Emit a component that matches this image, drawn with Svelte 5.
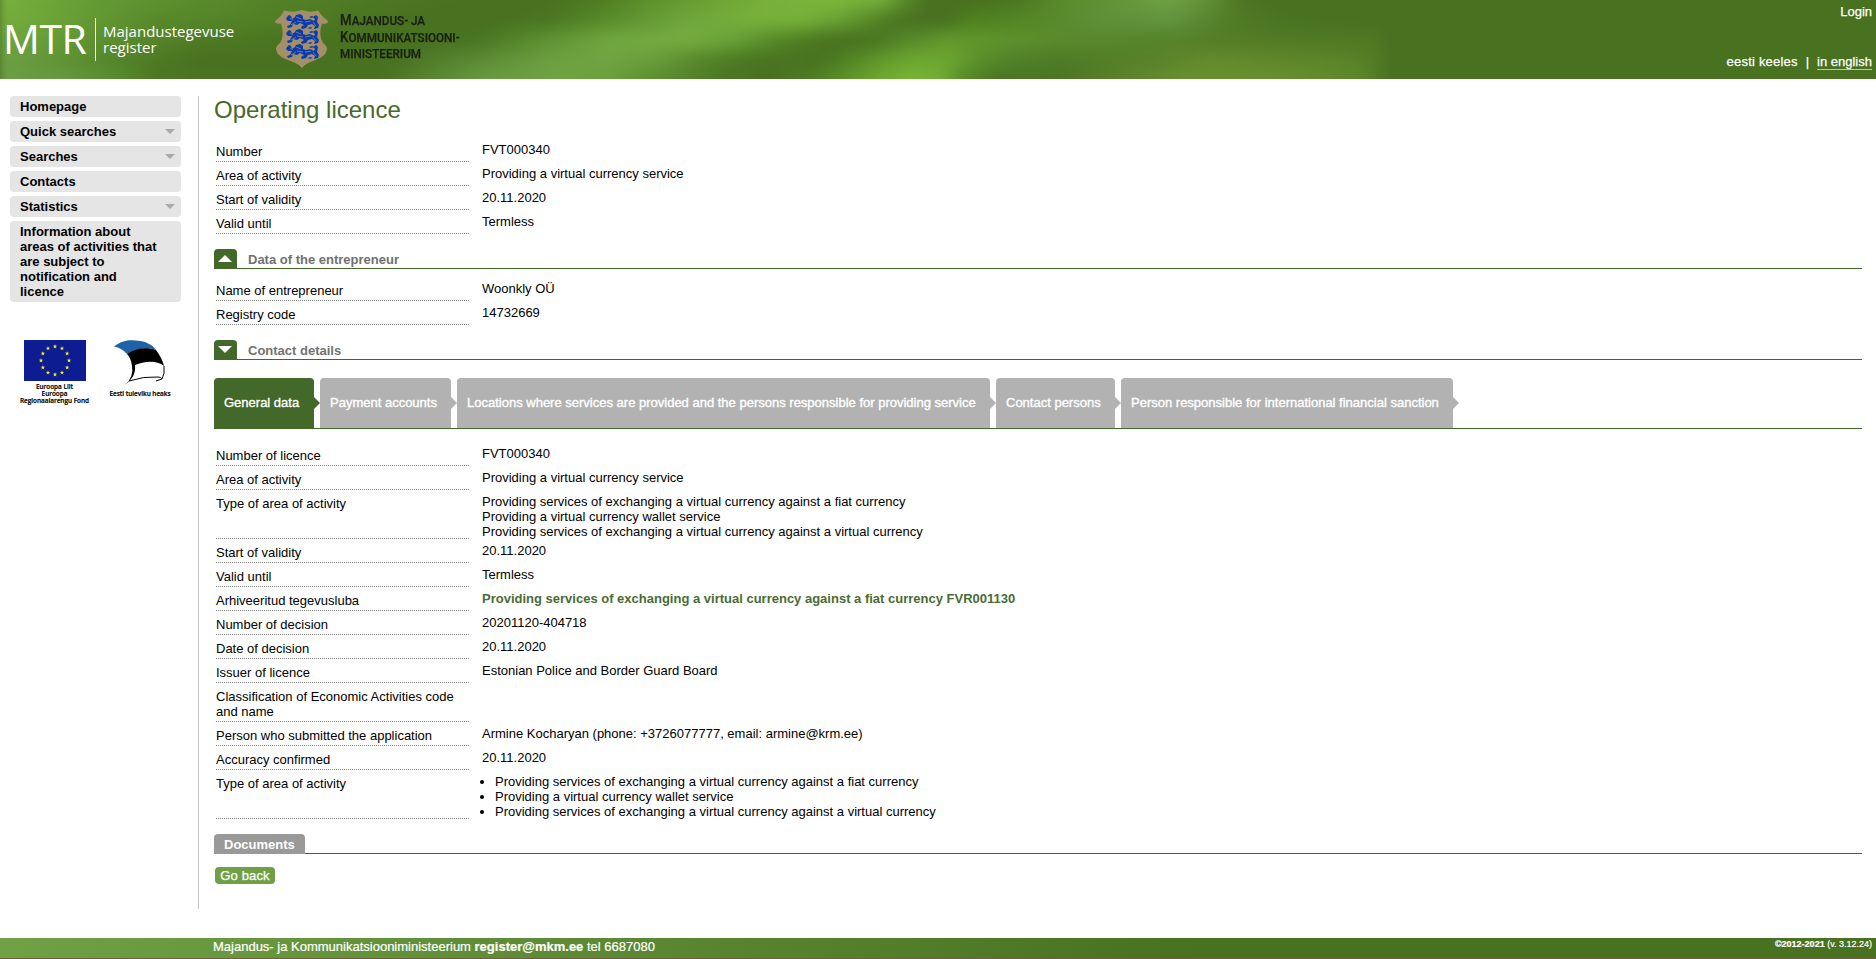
<script>
  const menu = [
    { label: 'Homepage' },
    { label: 'Quick searches', sub: true },
    { label: 'Searches', sub: true },
    { label: 'Contacts' },
    { label: 'Statistics', sub: true },
    { label: 'Information about areas of activities that are subject to notification and licence' }
  ];
  const summary = [
    ['Number', 'FVT000340'],
    ['Area of activity', 'Providing a virtual currency service'],
    ['Start of validity', '20.11.2020'],
    ['Valid until', 'Termless']
  ];
  const company = [
    ['Name of entrepreneur', 'Woonkly OÜ'],
    ['Registry code', '14732669']
  ];
  const tabs = [
    { label: 'General data', width: 100 },
    { label: 'Payment accounts', width: 131 },
    { label: 'Locations where services are provided and the persons responsible for providing service', width: 533 },
    { label: 'Contact persons', width: 119 },
    { label: 'Person responsible for international financial sanction', width: 332 }
  ];
  const services = [
    'Providing services of exchanging a virtual currency against a fiat currency',
    'Providing a virtual currency wallet service',
    'Providing services of exchanging a virtual currency against a virtual currency'
  ];
  const details = [
    { k: 'Number of licence', v: ['FVT000340'] },
    { k: 'Area of activity', v: ['Providing a virtual currency service'] },
    { k: 'Type of area of activity', v: services },
    { k: 'Start of validity', v: ['20.11.2020'] },
    { k: 'Valid until', v: ['Termless'] },
    { k: 'Arhiveeritud tegevusluba', link: 'Providing services of exchanging a virtual currency against a fiat currency FVR001130' },
    { k: 'Number of decision', v: ['20201120-404718'] },
    { k: 'Date of decision', v: ['20.11.2020'] },
    { k: 'Issuer of licence', v: ['Estonian Police and Border Guard Board'] },
    { k: 'Classification of Economic Activities code and name', v: [] },
    { k: 'Person who submitted the application', v: ['Armine Kocharyan (phone: +3726077777, email: armine@krm.ee)'] },
    { k: 'Accuracy confirmed', v: ['20.11.2020'] },
    { k: 'Type of area of activity', list: services }
  ];
  const stars = Array.from({ length: 12 }, (_, i) => {
    const a = (i * Math.PI) / 6;
    return [31 + 14 * Math.sin(a), 20.5 - 14 * Math.cos(a)];
  });

  // Colour stops along x at several heights of the header; each layer fades into the next one down.
  const waves = [
    [0, '#79b13f 0,#649a34 100px,#598b2c 200px,#527f26 300px,#4b7622 400px,#487120 480px,#487120 545px,#4e7a22 592px,#5f942c 658px,#78b03b 766px,#7cb83c 837px,#74ac3a 882px,#5a8a2b 905px,#487120 930px,#487120 980px,#4b7622 1015px,#588a2a 1060px,#6ea043 1165px,#69993e 1190px,#4c7521 1245px,#487120 1270px'],
    [20, '#76ae3e 0,#69a035 67px,#588a2b 150px,#4f7c25 300px,#487120 400px,#487120 500px,#4a7621 547px,#5a8e2c 614px,#6ea43c 681px,#78b03b 748px,#77b13a 800px,#68a033 840px,#4c7822 890px,#487120 917px,#487120 945px,#50821f 975px,#568828 1038px,#60903a 1105px,#639440 1170px,#527d27 1230px,#487321 1290px,#487120 1390px'],
    [40, '#6fa63f 0,#639834 67px,#4f7b24 200px,#49731f 300px,#487120 440px,#487622 480px,#5f9232 547px,#72a840 614px,#76ac3f 690px,#68a038 735px,#548626 780px,#487120 830px,#48741f 875px,#55862a 904px,#64992b 949px,#5f942c 993px,#5a8a2c 1060px,#56842b 1150px,#527b25 1250px,#4f7923 1375px,#487120 1390px'],
    [60, '#6da044 0,#5b8f30 80px,#4f7b24 150px,#487120 200px,#487321 400px,#547f2b 440px,#5c8b35 480px,#6c9f40 547px,#70a442 605px,#689c3a 655px,#558529 703px,#4a7621 748px,#487120 810px,#4c7c22 837px,#64992c 882px,#6ca930 917px,#6aa530 950px,#5b8f2a 980px,#50802a 1015px,#4e7b26 1060px,#58822a 1150px,#648c2e 1210px,#5a8429 1350px,#4f7a24 1380px,#487120 1392px'],
    [79, '#6c9e46 0,#669940 67px,#568a2e 120px,#4b7622 160px,#487120 380px,#54802b 415px,#679940 480px,#70a342 565px,#6a9f3c 610px,#5c8f30 655px,#4b7622 725px,#487120 770px,#4f8022 815px,#6fa830 880px,#78b436 910px,#73ad36 940px,#5b8f2a 960px,#4b7622 993px,#4b7622 1060px,#587e29 1105px,#68902f 1180px,#688f2f 1280px,#5c8829 1360px,#4d7824 1382px,#487120 1392px']
  ];
</script>

{#snippet rows(items)}
  <dl>
    {#each items as [k, v]}
      <div class="row"><dt>{k}</dt><dd>{v}</dd></div>
    {/each}
  </dl>
{/snippet}

<header>
  <div class="waves">
    {#each waves as [y, stops], i}
      <div
        class="wave"
        style:background-image="linear-gradient(90deg,{stops})"
        style:mask-image={i ? `linear-gradient(transparent ${waves[i - 1][0] + 12}px,#000 ${y + 12}px)` : 'none'}
      ></div>
    {/each}
  </div>
  <div class="brand">
    <span class="mtr">MTR</span>
    <span class="bar"></span>
    <span class="name"><span>Majandustegevuse</span><span>register</span></span>
    <svg class="crest" width="54" height="60" viewBox="0 0 54 60" role="img" aria-label="Coat of arms">
      <path d="M9 1.500Q18 4 27 1Q36 4 43 1.500Q47 8 53 12Q53 15.500 47 14.500Q43 26 48 34Q52 37 52 40C50 52 34 50 27 59C20 50 3 52 1 40Q1 37 5 34Q10 26 6 14.500Q0 15.500 0 12Q6 8 9 1.500Z" fill="#a38f68" />
      {#each [5, 20, 35] as y}
        <g transform="translate(11 {y})" fill="#0a3bb0">
          <path d="M1 3L3 1L5 2L6 5L9 3L10 1L14 0L17 2L17 5L20 6L24 5L28 7L29 5L27 3L30 1L32 3L31 8L33 11L32 14L28 15L29 12L26 10L22 11L20 14L16 15L15 13L18 11L14 9L11 11L7 10L6 13L2 14L1 12L4 11L6 7L2 7L0 5Z" />
          <path d="M4 4L7 6M10 3L15 5M11 7L17 8M19 8L25 7M5 11L10 8M27 8L30 12M22 4L25 2" stroke="#a38f68" stroke-width=".7" />
          <path d="M23 3L26 2L28 3L25 4ZM21 14L26 13L25 15Z" />
        </g>
      {/each}
    </svg>
    <span class="ministry"><b>M</b>AJANDUS- JA<br /><b>K</b>OMMUNIKATSIOONI-<br />MINISTEERIUM</span>
  </div>
  <div class="userbar">
    <a class="login" href="#login">Login</a>
    <div class="langs"><a href="#et">eesti keeles</a><span>|</span><a class="on" href="#en">in english</a></div>
  </div>
</header>

<div class="page">
  <aside>
    <nav>
      {#each menu as m}
        <a href="#menu"><span>{m.label}</span>{#if m.sub}<i></i>{/if}</a>
      {/each}
    </nav>
    <div class="logos">
      <div class="eu">
        <svg width="62" height="41" viewBox="0 0 62 41" aria-hidden="true">
          <rect width="62" height="41" fill="#0d1c91" />
          {#each stars as [x, y]}
            <path transform="translate({x} {y})" d="M0-2.3L.6-.7L2.2-.7L.9.3L1.4 1.9L0 .9L-1.4 1.9L-.9.3L-2.2-.7L-.6-.7Z" fill="#f3ec2c" />
          {/each}
        </svg>
        <span>Euroopa Liit<br />Euroopa<br />Regionaalarengu Fond</span>
      </div>
      <div class="ee">
        <svg width="52" height="46" viewBox="0 0 52 46" aria-hidden="true">
          <path d="M1 6.500C10-1 21-1 32 2C38 4.500 41 7 43 10C34 7 22 9 14 14Q9 8 1 6.500Z" fill="#1f62a8" />
          <path d="M14 14C22 8 34 7 43 10Q49 18 51 26C44 20 31 21 22 25C23 35 18 40 12 45Q21 37 19 26Q18 18 14 14Z" fill="#000" />
          <path d="M51 26Q52 34 49 39Q48 37 45 37M49 39L43 41M45 37Q31 36 16 41" fill="none" stroke="#000" stroke-width="1" />
        </svg>
        <span>Eesti tuleviku heaks</span>
      </div>
    </div>
  </aside>

  <main>
    <h1>Operating licence</h1>
    {@render rows(summary)}
    <h2 class="s1"><i><svg width="14" height="7" viewBox="0 0 14 7"><path d="M0 7L7 0L14 7Z" fill="#fff" /></svg></i>Data of the entrepreneur</h2>
    {@render rows(company)}
    <h2 class="s2"><i><svg width="14" height="7" viewBox="0 0 14 7"><path d="M0 0L7 7L14 0Z" fill="#fff" /></svg></i>Contact details</h2>
    <div class="tabs">
      {#each tabs as t, i}
        <a href="#tab" class:active={i === 0} style:width="{t.width}px">{t.label}</a>
      {/each}
    </div>
    <dl class="details">
      {#each details as d}
        <div class="row">
          <dt>{d.k}</dt>
          <dd>
            {#if d.link}
              <a href="#licence">{d.link}</a>
            {:else if d.list}
              <ul>{#each d.list as s}<li>{s}</li>{/each}</ul>
            {:else}
              {#each d.v as line}<div>{line}</div>{/each}
            {/if}
          </dd>
        </div>
      {/each}
    </dl>
    <div class="docs"><span>Documents</span></div>
    <button>Go back</button>
  </main>
</div>

<footer>
  <span>Majandus- ja Kommunikatsiooniministeerium <b>register@mkm.ee</b> tel 6687080</span>
  <small><b>©2012-2021</b> (v. 3.12.24)</small>
</footer>

<style>
  :global(body) { margin: 0; background: #fff; overflow: hidden; }
  :global(#app) { height: 959px; display: flex; flex-direction: column; font: 13px/15px 'Liberation Sans', Arial, sans-serif; color: #000; }
  a { color: inherit; text-decoration: none; }
  header { position: relative; height: 79px; flex: none; background: #487120; display: flex; justify-content: space-between; overflow: hidden; color: #fff; }
  .waves { position: absolute; inset: -12px 0; filter: blur(4px); }
  .wave { position: absolute; inset: 0 -20px 0 0; }
  .brand { position: relative; display: flex; align-items: flex-start; }
  .mtr { font: 41px/42px 'Open Sans', sans-serif; letter-spacing: -.5px; margin: 17px 0 0 3px; width: 92px; white-space: nowrap; }
  .bar { width: 1px; height: 43px; margin-top: 18px; background: #fff; }
  .name { display: flex; flex-direction: column; font: 15px/15.500px 'Open Sans', sans-serif; margin: 24px 0 0 7px; width: 172px; }
  .crest { margin-top: 9px; }
  .ministry { font: 500 12.300px/16px Roboto, sans-serif; color: #1b1f14; margin: 12px 0 0 11px; white-space: nowrap; transform: scaleX(.95); transform-origin: 0 0; -webkit-text-stroke: .25px #1b1f14; }
  .ministry b { font-weight: 500; font-size: 14px; }
  .userbar { position: relative; display: flex; flex-direction: column; justify-content: space-between; align-items: flex-end; padding: 4px 4px 9px 0; -webkit-text-stroke: .25px #fff; }
  .langs { display: flex; gap: 8px; }
  .langs a:first-child { letter-spacing: .2px; }
  .on { border-bottom: 1px solid #b9cba6; }
  .page { flex: 1; display: flex; align-items: flex-start; padding: 17px 14px 0 10px; }
  aside { width: 171px; flex: none; margin-right: 17px; }
  nav { display: flex; flex-direction: column; gap: 4px; }
  nav a { display: flex; align-items: center; justify-content: space-between; background: #e5e5e5; border-radius: 4px; padding: 3px 6px 3px 10px; font-weight: bold; }
  nav span { max-width: 142px; }
  nav i { border: 5px solid transparent; border-top-color: #aaa; border-bottom: 0; }
  .logos { display: flex; margin: 38px 0 0 10px; font: 600 6.400px/7px 'Open Sans', sans-serif; -webkit-text-stroke: .2px #000; white-space: nowrap; text-align: center; }
  .eu { width: 69px; display: flex; flex-direction: column; align-items: center; gap: 2px; }
  .ee { width: 62px; margin-left: 20px; display: flex; flex-direction: column; align-items: center; gap: 4px; }
  .ee svg { margin-right: 2px; }
  main { flex: 1; height: 813px; border-left: 1px solid #c6c6c6; padding-left: 15px; }
  h1 { font: 24px/28px 'Liberation Sans', Arial, sans-serif; color: #456a2c; margin: 0 0 14px; }
  dl { margin: 0; padding-left: 2px; }
  .row { display: flex; min-height: 24px; }
  dt { width: 253px; box-sizing: border-box; padding: 6px 10px 2px 0; border-bottom: 1px dotted #888; }
  dd { margin: 0 0 0 13px; padding-top: 4px; }
  dd a { color: #4a6c33; font-weight: bold; }
  ul { margin: 0; padding-left: 13px; }
  h2 { height: 19px; margin: 15px 0 0; border-bottom: 1px solid #42682a; color: #717171; display: flex; font: bold 13px/22px 'Liberation Sans', Arial, sans-serif; }
  h2 i { width: 23px; height: 19px; margin-right: 11px; padding-right: 2px; box-sizing: border-box; background: #42682a; border-radius: 4px 4px 0 0; display: flex; align-items: center; justify-content: center; }
  .s1 { margin-bottom: 8px; }
  .tabs { display: flex; gap: 6px; height: 50px; margin-top: 18px; border-bottom: 1px solid #42682a; }
  .tabs a { position: relative; box-sizing: border-box; flex: none; padding-left: 10px; border-radius: 4px 4px 0 0; background: #b2b2b2; color: #fff; font: 13px/50px 'Liberation Sans', Arial, sans-serif; -webkit-text-stroke: .35px #fff; white-space: nowrap; }
  .tabs a::after { content: ''; position: absolute; left: 100%; top: 19px; border: 6px solid transparent; border-left-color: #b2b2b2; border-right: 0; }
  .tabs .active { background: #42682a; }
  .tabs .active::after { border-left-color: #42682a; }
  .details { margin-top: 13px; }
  .docs { display: flex; height: 19px; margin-top: 15px; border-bottom: 1px solid #42682a; }
  .docs span { height: 20px; padding: 0 10px; background: #999; color: #fff; border-radius: 4px 4px 0 0; font-weight: bold; line-height: 21px; }
  button { display: block; margin: 13px 0 0 1px; width: 60px; height: 17px; padding: 0; border: 0; border-radius: 4px; background: #6fa046; color: #fff; font: 13px/17px 'Liberation Sans', Arial, sans-serif; letter-spacing: .15px; -webkit-text-stroke: .25px #fff; }
  footer { flex: none; height: 20px; border-bottom: 1px solid #775a43; background: linear-gradient(90deg, #70a145, #487120 1200px); color: #fff; display: flex; justify-content: space-between; padding: 0 4px 0 213px; line-height: 17px; -webkit-text-stroke: .2px #fff; }
  small { font-size: 9px; line-height: 12px; }
</style>
